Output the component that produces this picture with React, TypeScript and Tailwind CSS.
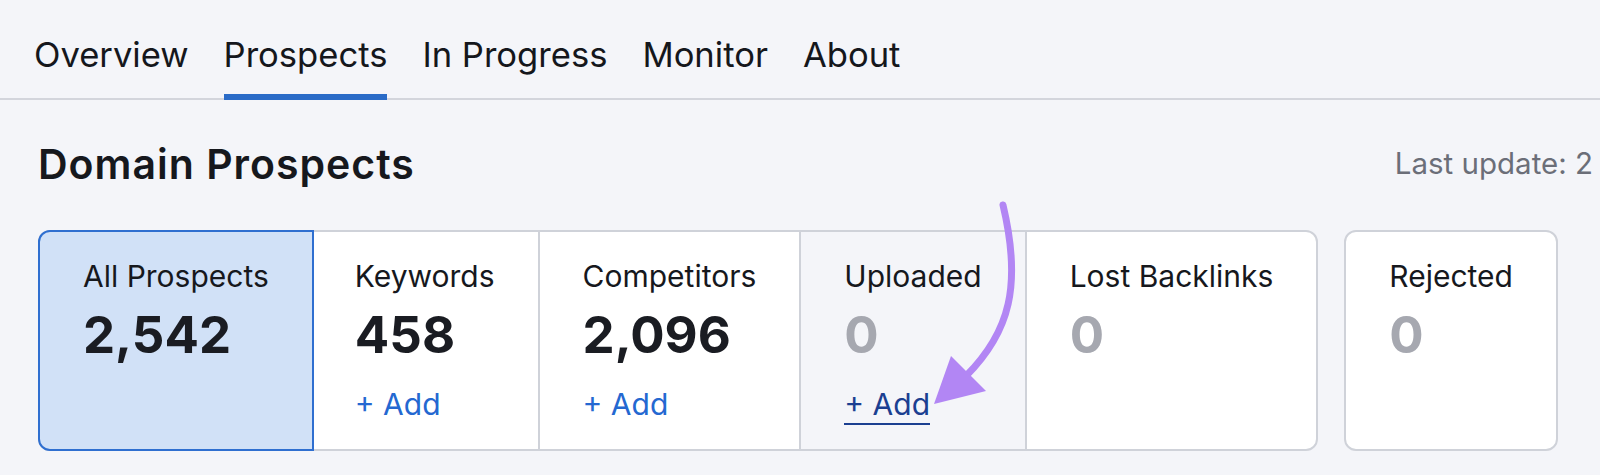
import React from 'react';

const tabs = ['Overview', 'Prospects', 'In Progress', 'Monitor', 'About'];

interface Stat {
  label: string;
  value: string;
  empty?: boolean;
  add?: 'plain' | 'visited';
  active?: boolean;
  muted?: boolean;
}

const stats: Stat[] = [
  { label: 'All Prospects', value: '2,542', active: true },
  { label: 'Keywords', value: '458', add: 'plain' },
  { label: 'Competitors', value: '2,096', add: 'plain' },
  { label: 'Uploaded', value: '0', empty: true, add: 'visited', muted: true },
  { label: 'Lost Backlinks', value: '0', empty: true },
];

const StatCard: React.FC<{ s: Stat; className?: string }> = ({ s, className = '' }) => (
  <div className={`flex flex-col px-[43px] pt-[26px] ${className}`}>
    <div className="text-[30px] leading-[36px] text-[#16181d] whitespace-nowrap">{s.label}</div>
    <div className={`mt-[13px] text-[51px] leading-[56px] font-bold ${s.empty ? 'text-[#a6a8b0]' : 'text-[#1a1c22]'}`}>
      {s.value}
    </div>
    {s.add === 'plain' && (
      <div className="mt-[23px] text-[30px] leading-[36px] text-[#2468d1] whitespace-nowrap">+ Add</div>
    )}
    {s.add === 'visited' && (
      <div className="mt-[23px] text-[30px] leading-[36px] text-[#1b3f91] whitespace-nowrap">
        <span className="border-b-2 border-[#1b3f91] pb-[1px]">+ Add</span>
      </div>
    )}
  </div>
);

export default function App() {
  return (
    <div className="relative w-[1600px] h-[475px] overflow-hidden bg-[#f4f5f9] font-['Inter','Noto_Sans',sans-serif]">
      <nav className="flex items-end gap-[35px] pl-[34px] h-[100px] border-b-2 border-[#d3d5dc]">
        {tabs.map(t => (
          <div
            key={t}
            className={`pb-[19px] -mb-[2px] border-b-[6px] text-[34.6px] leading-[42px] text-[#15171c] ${
              t === 'Prospects' ? 'border-[#2a6bc7]' : 'border-transparent'
            }`}
          >
            {t}
          </div>
        ))}
      </nav>

      <div className="flex items-start justify-between pl-[38px] pr-[7px] mt-[40px] h-[48px]">
        <h1 className="text-[41px] leading-[48px] font-semibold tracking-[1px] text-[#16181d]">Domain Prospects</h1>
        <div className="mt-[6px] text-[29.5px] leading-[34px] text-[#6b6e78] whitespace-nowrap">Last update: 2</div>
      </div>

      <div className="flex gap-[26px] pl-[38px] mt-[42px]">
        <div className="flex h-[221px] rounded-[12px] border-2 border-[#cfd2d9] bg-white">
          {stats.map((s, i) => (
            <StatCard
              key={s.label}
              s={s}
              className={
                s.active
                  ? '-m-[2px] rounded-l-[12px] border-2 border-[#2f6fd0] bg-[#d1e1f7]'
                  : `${i > 1 ? 'border-l-2 border-[#cfd2d9]' : ''} ${s.muted ? 'bg-[#f4f5f9]' : ''}`
              }
            />
          ))}
        </div>
        <div className="flex h-[221px] rounded-[12px] border-2 border-[#cfd2d9] bg-white">
          <StatCard s={{ label: 'Rejected', value: '0', empty: true }} />
        </div>
      </div>

      <svg className="absolute left-0 top-0 pointer-events-none" width="1600" height="475" viewBox="0 0 1600 475">
        <path d="M1003 205 C 1022 285, 1010 332, 966 376" fill="none" stroke="#b286f4" strokeWidth="7" strokeLinecap="round" />
        <polygon points="951,356 986,391 934,404" fill="#b286f4" />
      </svg>
    </div>
  );
}
